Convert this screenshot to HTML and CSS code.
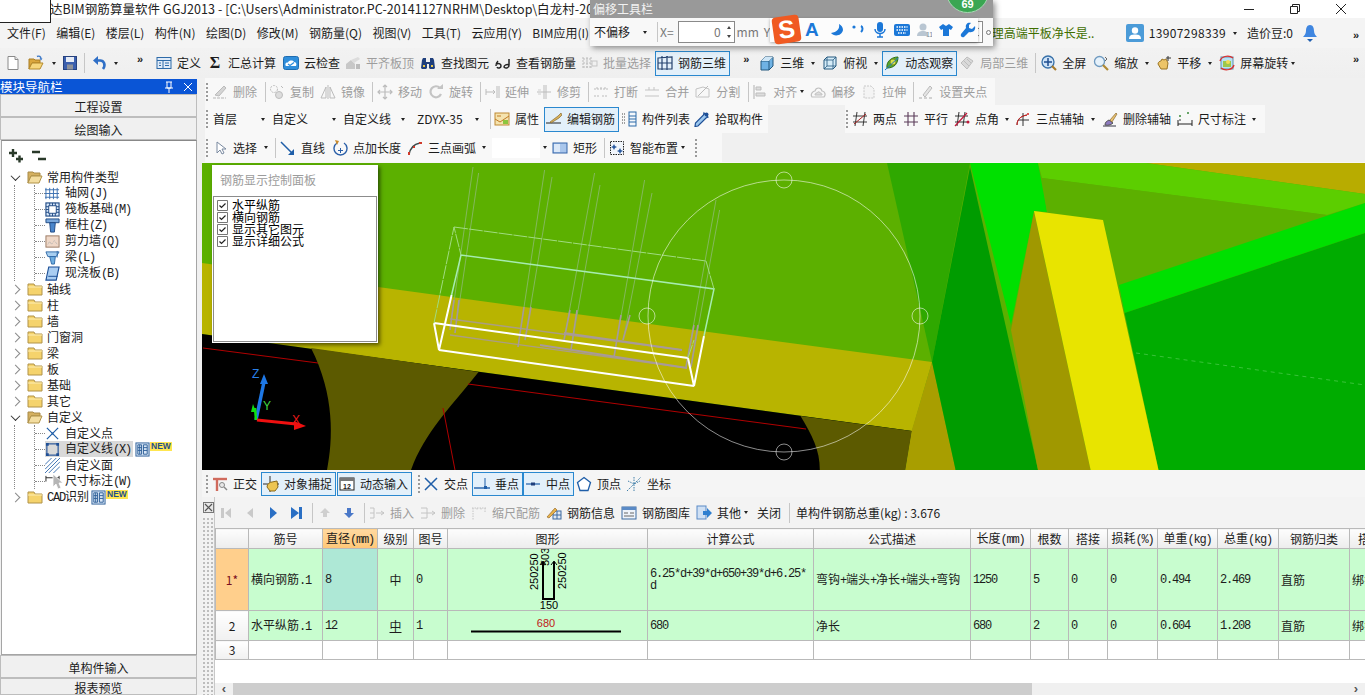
FILE: index.html
```html
<!DOCTYPE html>
<html lang="zh">
<head>
<meta charset="utf-8">
<title>GGJ2013</title>
<link rel="stylesheet" href="styles.css">
</head>
<body>
<svg class="sprite" xmlns="http://www.w3.org/2000/svg">
<symbol id="new" viewBox="0 0 16 16"><path d="M3 1.500h7l3 3v10H3z" fill="#fff" stroke="#8a8a8a"/><path d="M10 1.500v3h3" fill="#e8e8e8" stroke="#8a8a8a"/></symbol>
<symbol id="open" viewBox="0 0 16 16"><path d="M1 4h5l1 1h5v3H4l-3 6z" fill="#d9a63c" stroke="#a87c24"/><path d="M1 14l3-6h11l-3 6z" fill="#f6d77c" stroke="#b48a2c"/><path d="M9 1.500c2-1 4 0 4 2.500" fill="none" stroke="#3c78c8" stroke-width="1.400"/><path d="M11.500 3.500h3l-1.500 2z" fill="#3c78c8"/></symbol>
<symbol id="save" viewBox="0 0 16 16"><rect x="1.500" y="1.500" width="13" height="13" fill="#3b5fae" stroke="#27427e"/><rect x="4" y="2" width="8" height="5" fill="#e6ecf6"/><rect x="5" y="9.500" width="6" height="5" fill="#8e9198"/></symbol>
<symbol id="undo" viewBox="0 0 16 16"><path d="M12 14c3-4 1-9-3.500-8.500H5" fill="none" stroke="#2f6fc6" stroke-width="2.600"/><path d="M7 1L2 5.500 7 10z" fill="#2f6fc6"/></symbol>
<symbol id="def" viewBox="0 0 16 16"><rect x="1" y="2.500" width="14" height="11" fill="#e0ebf8" stroke="#2d6aa8"/><path d="M1 5.500h14M7 5.500v8M9 8h4M9 10.500h4M3 8h2M3 10.500h2" stroke="#2d6aa8"/></symbol>
<symbol id="cloud" viewBox="0 0 16 16"><rect x="0.500" y="1.500" width="15" height="13" rx="2" fill="#2f8edb" stroke="#1e6cb0"/><path d="M3 11c-1.500-2 0-4 2-3.500C6 5 10 5 11 7c2 0 3 2 2 4z" fill="#fff"/><path d="M5 9l2 1.500 4-3" fill="none" stroke="#2f8edb" stroke-width="1.300"/></symbol>
<symbol id="flat" viewBox="0 0 16 16"><path d="M1 14V9l5-4 4 4v5z" fill="#c7c7c7"/><path d="M6 5l7-3 2 2-6 4z" fill="#dcdcdc"/><path d="M11 9h4v5h-4z" fill="#bbb"/></symbol>
<symbol id="bino" viewBox="0 0 16 16"><path d="M1 13l1-8 1-2h3v4h4V3h3l1 2 1 8-1 1h-4l-1-1V9H7v4l-1 1H2z" fill="#1f3f7c"/><path d="M3 10h2v2H3zM11 10h2v2h-2z" fill="#ecc94a"/></symbol>
<symbol id="glass" viewBox="0 0 16 16"><path d="M1 11c0-2 1-4 2-5M2 9c2-1 4 0 4 2s-3 3-4 1M14 4v6c0 3-3 4-5 2 0-2 3-3 5-2" fill="none" stroke="#222" stroke-width="1.500"/></symbol>
<symbol id="batch" viewBox="0 0 16 16"><path d="M1 2v12M5 2v12M9 2v12M1 4h8M1 8h8M1 12h8" stroke="#bbb" stroke-dasharray="2 1"/><rect x="10" y="6" width="5" height="5" fill="none" stroke="#c5c5c5"/></symbol>
<symbol id="r3d" viewBox="0 0 16 16"><path d="M1 3l14-1v12H1zM1 8h14M5 1v14M10 1v14" fill="none" stroke="#24426e" stroke-width="1.200"/></symbol>
<symbol id="cube" viewBox="0 0 16 16"><path d="M2 6l4-4h8v9l-4 4H2z" fill="#6fb2e4" stroke="#24587e"/><path d="M2 6h8v9M10 6l4-4" fill="none" stroke="#24587e"/><path d="M2 6l4-4h8l-4 4z" fill="#cfe6f6"/></symbol>
<symbol id="cubeo" viewBox="0 0 16 16"><path d="M2 5l3-3h9v9l-3 3H2z" fill="#d6ecf8" stroke="#24587e"/><path d="M2 5h9v9M11 5l3-3M5 2v9h9M5 11l-3 3" fill="none" stroke="#24587e" stroke-width=".8"/></symbol>
<symbol id="orbit" viewBox="0 0 16 16"><path d="M3 13C2 7 7 2 14 2c0 7-4 11-11 11z" fill="#5aa52c" stroke="#2f6e18"/><circle cx="9" cy="7" r="3" fill="#d8e04a" stroke="#7a9420"/><path d="M1 15L14 3" stroke="#1c78c8"/></symbol>
<symbol id="local" viewBox="0 0 16 16"><path d="M2 8l6-6 6 4-6 8z" fill="#d9d9d9" stroke="#bdbdbd"/><path d="M5 6l5 5M8 4l4 4" stroke="#bdbdbd"/></symbol>
<symbol id="zall" viewBox="0 0 16 16"><circle cx="7" cy="7" r="6" fill="#cfe3f7" stroke="#3770a8" stroke-width="1.300"/><path d="M7 3v8M3 7h8" stroke="#1f4e90" stroke-width="1.500"/><path d="M11 11l4 4" stroke="#a97a2a" stroke-width="2.200"/></symbol>
<symbol id="zoom" viewBox="0 0 16 16"><circle cx="6.500" cy="6.500" r="5" fill="#e6f1fa" stroke="#6f9ac0" stroke-width="1.300"/><path d="M10 10l5 5" stroke="#b08a34" stroke-width="2.200"/><path d="M12 2l2 2-2 2" fill="none" stroke="#666"/></symbol>
<symbol id="pan" viewBox="0 0 16 16"><path d="M2 9c0-2 2-3 3-3l1-2 2 1 2-1 1 2 1 2-1 6H5z" fill="#ecc468" stroke="#9a7424"/><path d="M12 1v5M10 3h5" stroke="#333"/></symbol>
<symbol id="rot" viewBox="0 0 16 16"><rect x="2" y="2" width="12" height="12" fill="#b8e0f4" stroke="#5a92ae"/><rect x="4" y="6" width="8" height="6" fill="#9dc74c"/><circle cx="9" cy="7" r="2" fill="#f2dc55"/><path d="M1 6C2 2 9-1 14 3M15 10c-1 4-8 7-13 3" fill="none" stroke="#dc2e2e" stroke-width="1.300"/></symbol>
<symbol id="user" viewBox="0 0 18 18"><rect width="18" height="18" rx="2" fill="#4b9bd8"/><circle cx="9" cy="6.500" r="3.200" fill="#fff"/><path d="M3 15c0-4 3-4.500 6-4.500s6 .5 6 4.500z" fill="#fff"/></symbol>
<symbol id="bell" viewBox="0 0 16 18"><path d="M8 1c-3 0-4 3-4 6 0 3-2 5-3 6h14c-1-1-3-3-3-6 0-3-1-6-4-6z" fill="#3f86e0"/><path d="M5 15h6l-3 3z" fill="#1f5fb0"/></symbol>
<symbol id="del" viewBox="0 0 16 16"><path d="M1 14h13" stroke="#b5b5b5" stroke-dasharray="3 1"/><path d="M3 11L12 2l2 2-7 8z" fill="#d5d5d5" stroke="#bbb"/></symbol>
<symbol id="copy" viewBox="0 0 16 16"><circle cx="5" cy="5" r="3.500" fill="none" stroke="#bdbdbd" stroke-dasharray="2 1"/><circle cx="10" cy="11" r="3.500" fill="#ddd" stroke="#bdbdbd"/><path d="M12 2l2 2" stroke="#bbb"/></symbol>
<symbol id="mirror" viewBox="0 0 16 16"><path d="M8 1v14" stroke="#bbb"/><path d="M6 3v11H1zM10 3v11h5z" fill="none" stroke="#bbb"/></symbol>
<symbol id="move" viewBox="0 0 16 16"><path d="M8 1v14M1 8h14M6 3l2-2 2 2M6 13l2 2 2-2M3 6L1 8l2 2M13 6l2 2-2 2" fill="none" stroke="#bcbcbc" stroke-width="1.200"/></symbol>
<symbol id="rotate" viewBox="0 0 16 16"><path d="M12 4a5.500 5.500 0 1 0 1 6" fill="none" stroke="#c4c4c4" stroke-width="2.200"/><path d="M9 5h6V0z" fill="#c4c4c4"/></symbol>
<symbol id="extend" viewBox="0 0 16 16"><path d="M2 5v6M13 2v12M2 8h9M15 2v12" fill="none" stroke="#bcbcbc"/><path d="M9 6l2 2-2 2" fill="none" stroke="#bcbcbc"/></symbol>
<symbol id="trim" viewBox="0 0 16 16"><path d="M8 1v14M10 1v14M1 8h14" stroke="#bcbcbc"/><path d="M2 6h3M2 10h3" stroke="#d0d0d0"/></symbol>
<symbol id="break" viewBox="0 0 16 16"><path d="M1 12h6M9 12h6M1 5h14M4 3v2M8 3v2M12 3v2" stroke="#bcbcbc" stroke-dasharray="2 1"/></symbol>
<symbol id="merge" viewBox="0 0 16 16"><path d="M1 12h14M1 6h14M5 3v3M10 3v3" stroke="#c4c4c4"/></symbol>
<symbol id="split" viewBox="0 0 16 16"><path d="M1 13V5l7-2 6 2v8z" fill="none" stroke="#c4c4c4"/><path d="M3 12L13 2" stroke="#bbb"/></symbol>
<symbol id="align" viewBox="0 0 16 16"><path d="M2 1v14" stroke="#b0b0b0"/><path d="M4 3h5v3H4zM4 9h9v3H4z" fill="#ddd" stroke="#bdbdbd"/></symbol>
<symbol id="offset" viewBox="0 0 16 16"><path d="M2 13c-2-3 1-6 3-6 1-4 6-4 7 0 3 0 4 4 2 6z" fill="none" stroke="#c0c0c0" stroke-width="1.200"/><path d="M5 11c0-2 1-2 2-2 1-2 3-1 3 0 2 0 2 1 2 2z" fill="#ddd" stroke="#c0c0c0"/></symbol>
<symbol id="stretch" viewBox="0 0 16 16"><path d="M3 2h7l3 3v9H3z" fill="#f4f4f4" stroke="#c8c8c8" stroke-dasharray="2 1"/></symbol>
<symbol id="grip" viewBox="0 0 16 16"><path d="M1 14h3M6 14h3M11 14h3" stroke="#aaa"/><path d="M5 11l7-9 2 2-7 9z" fill="#e4e4e4" stroke="#bbb"/></symbol>
<symbol id="prop" viewBox="0 0 16 16"><rect x="1" y="2" width="14" height="12" fill="#f5e3ae" stroke="#bf8a33"/><path d="M3 5h4M1 8l5 3 9-6" fill="none" stroke="#c07a24"/><path d="M9 9h5v4H9z" fill="#8cc63f"/></symbol>
<symbol id="edit" viewBox="0 0 16 16"><path d="M0 12h15" stroke="#222"/><path d="M4 11l8-6 3-3 1 2-3 3-8 5z" fill="#d8b25c" stroke="#7a5a20" stroke-width=".6"/></symbol>
<symbol id="list" viewBox="0 0 16 16"><rect x="8" y="1" width="7" height="14" fill="#f4f8fc" stroke="#2d6aa8"/><path d="M8 5h7M8 8h7M8 11h7" stroke="#2d6aa8"/><path d="M1 3h4M1 6h4M1 9h4M1 12h4" stroke="#444" stroke-dasharray="1 1"/></symbol>
<symbol id="pick" viewBox="0 0 16 16"><path d="M10 2l4 4-2 1-8 8-3 .5L1.500 12l8-8z" fill="#9cc7ee" stroke="#1e4f96" stroke-width="1.200"/><circle cx="12.500" cy="3.500" r="2" fill="#1e4f96"/></symbol>
<symbol id="two" viewBox="0 0 16 16"><path d="M5 1l-2 14M13 1l-2 14M1 5l14 0M1 11h14" stroke="#3a3a3a"/><path d="M2 13L14 3" stroke="#a22"/></symbol>
<symbol id="para" viewBox="0 0 16 16"><path d="M5 1v14M11 1v14M1 5h14M1 11h14" stroke="#5a3a58" stroke-width="1.100"/></symbol>
<symbol id="ang" viewBox="0 0 16 16"><path d="M5 1L3 15M11 1L9 15M1 5h13M1 11h13" stroke="#333"/><path d="M1 15L13 2" stroke="#c0173a" stroke-width="1.200"/><circle cx="14" cy="11" r="1.500" fill="#c0173a"/></symbol>
<symbol id="three" viewBox="0 0 16 16"><path d="M2 14c0-6 4-9 10-10M8 2v13M3 9h11" fill="none" stroke="#333"/><path d="M2 14c0-6 4-9 10-10" fill="none" stroke="#d22"/><circle cx="13" cy="3" r="1" fill="#d22"/></symbol>
<symbol id="brush" viewBox="0 0 16 16"><path d="M1 15h13" stroke="#334"/><path d="M3 14c0-3 2-4 4-5l4 3c-1 1-4 3-8 2z" fill="#8d7bc0" stroke="#555"/><path d="M8 9l6-7 1 1-5 8z" fill="#e8c272" stroke="#77551c" stroke-width=".6"/></symbol>
<symbol id="dim" viewBox="0 0 16 16"><path d="M1 9v6M15 9v6M1 13h14" stroke="#222"/><circle cx="3" cy="5" r="1" fill="#3a8a3a"/><circle cx="11" cy="2" r="1" fill="#3a8a3a"/><circle cx="3" cy="9" r=".8" fill="#222"/></symbol>
<symbol id="sel" viewBox="0 0 16 16"><path d="M5 2v11l3-3 2 4 2-1-2-4h4z" fill="#fff" stroke="#7a8aa0"/></symbol>
<symbol id="line" viewBox="0 0 16 16"><path d="M1 2l12 12" stroke="#1f5ea8" stroke-width="1.500"/><path d="M14 15H8l6-6z" fill="#1f5ea8"/></symbol>
<symbol id="plen" viewBox="0 0 16 16"><path d="M5 3a6.500 6.500 0 1 0 7 0" fill="none" stroke="#2b5fa8" stroke-width="1.400"/><path d="M8.500 8v5M6 10.500h5" stroke="#2b5fa8"/><path d="M3 0l4 1-2 4z" fill="#c98a2a"/></symbol>
<symbol id="arc" viewBox="0 0 16 16"><path d="M2 15C3 8 7 4 13 3" fill="none" stroke="#3a4a4a" stroke-width="1.400"/><rect x="1" y="12" width="2" height="3" fill="#d03a2a"/><rect x="12" y="2" width="3" height="2" fill="#d03a2a"/><rect x="6" y="6" width="2" height="2" fill="#d03a2a"/></symbol>
<symbol id="rectm" viewBox="0 0 16 16"><rect x="1" y="3" width="14" height="10" fill="#a9c6ec" stroke="#3465a8"/><rect x="2" y="4" width="6" height="8" fill="#dbe8f8"/></symbol>
<symbol id="smart" viewBox="0 0 16 16"><rect x="1.500" y="1.500" width="13" height="13" fill="#f2f6fb" stroke="#222" stroke-dasharray="1.500 1"/><path d="M5 4l1 2 2 1-2 1-1 2-1-2-2-1 2-1zM11 8l1 2 2 1-2 1-1 2-1-2-2-1 2-1z" fill="#2a5aa0"/></symbol>
<symbol id="ortho" viewBox="0 0 16 16"><path d="M1 3h14" stroke="#d06a5c" stroke-width="2.400"/><path d="M5 3v12" stroke="#d06a5c" stroke-width="2.400"/><circle cx="10" cy="9" r="2.500" fill="#e8e8e8" stroke="#888"/><path d="M12 11l3 3" stroke="#888" stroke-width="1.400"/></symbol>
<symbol id="snap" viewBox="0 0 16 16"><path d="M0 8h16M7 0v16" stroke="#2a2a2a"/><path d="M4 11c0-3 3-5 5-5l5-1 1 6-3 4H7z" fill="#edc552" stroke="#8a6a1c"/></symbol>
<symbol id="dyn" viewBox="0 0 16 16"><rect x="1" y="2" width="14" height="12" fill="#fff" stroke="#222"/><rect x="1" y="2" width="14" height="3" fill="#777"/><text x="8" y="12.500" font-size="7" font-family="Liberation Sans" font-weight="bold" text-anchor="middle" fill="#222">12</text></symbol>
<symbol id="xp" viewBox="0 0 16 16"><path d="M2 2l12 12M14 2L2 14" stroke="#1f5ea8" stroke-width="1.500"/></symbol>
<symbol id="perp" viewBox="0 0 16 16"><path d="M0 12h16" stroke="#1f5ea8" stroke-width="1.400"/><path d="M11 2v11" stroke="#1f5ea8"/><rect x="10" y="10" width="3" height="3" fill="#1f5ea8"/></symbol>
<symbol id="mid" viewBox="0 0 16 16"><path d="M1 8h14" stroke="#1f5ea8" stroke-width="1.200"/><rect x="6" y="6.500" width="4" height="3" fill="#1f3f7c"/></symbol>
<symbol id="vert" viewBox="0 0 16 16"><path d="M8 1.500l6.500 5-2.500 8H4l-2.500-8z" fill="#fff" stroke="#1f5ea8" stroke-width="1.300"/></symbol>
<symbol id="coord" viewBox="0 0 16 16"><path d="M8 1v14M1 15l7-7 7-7M2 5l6 3 6-3" fill="none" stroke="#3f7ea8" stroke-dasharray="1.500 1"/></symbol>
<symbol id="nf" viewBox="0 0 16 16"><path d="M3 3h3v10H3zM13 3L7 8l6 5z" fill="#c9c9c9"/></symbol>
<symbol id="np" viewBox="0 0 16 16"><path d="M11 3L5 8l6 5z" fill="#c9c9c9"/></symbol>
<symbol id="nn" viewBox="0 0 16 16"><path d="M5 2l7 6-7 6z" fill="#2a6fc4"/></symbol>
<symbol id="nl" viewBox="0 0 16 16"><path d="M2 2l8 6-8 6zM10 2h3v12h-3z" fill="#2a6fc4"/></symbol>
<symbol id="up" viewBox="0 0 16 16"><path d="M8 3l5 5h-3v4H6V8H3z" fill="#cfcfcf"/></symbol>
<symbol id="down" viewBox="0 0 16 16"><path d="M8 13l5-5h-3V3H6v5H3z" fill="#4a78c8"/></symbol>
<symbol id="ins" viewBox="0 0 16 16"><path d="M1 3h4M1 8h4M1 13h4M5 3v10" stroke="#c4c4c4"/><path d="M7 8h8M12 6l3 2-3 2" fill="none" stroke="#c4c4c4"/></symbol>
<symbol id="rem" viewBox="0 0 16 16"><path d="M1 3h6v10H1" fill="none" stroke="#c4c4c4"/><path d="M1 8h14M12 6l3 2-3 2" fill="none" stroke="#c4c4c4"/></symbol>
<symbol id="scale" viewBox="0 0 16 16"><path d="M1 3h14M2 3v12M14 3v4M6 3v2M10 3v2" stroke="#c4c4c4" stroke-dasharray="1.500 1"/></symbol>
<symbol id="info" viewBox="0 0 16 16"><rect x="7" y="6" width="8" height="8" fill="#e0e8f2" stroke="#3d6aa0"/><path d="M7 10h8M11 6v8" stroke="#3d6aa0"/><path d="M1 12L9 3l2 2-8 8z" fill="#e8b34a" stroke="#8a5a1c" stroke-width=".6"/></symbol>
<symbol id="lib" viewBox="0 0 16 16"><rect x="1" y="2" width="14" height="12" fill="#eef3fa" stroke="#3d6aa0"/><rect x="1" y="2" width="14" height="3" fill="#5a8ac6"/><path d="M3 8h4M9 8h4M3 11h10" stroke="#666"/></symbol>
<symbol id="other" viewBox="0 0 16 16"><rect x="1" y="1" width="9" height="13" fill="#cfe0f4" stroke="#5a8ac6"/><path d="M7 6h4V3l5 5-5 5v-3H7z" fill="#2f7fd0"/></symbol>
<symbol id="fo" viewBox="0 0 16 16"><path d="M1 3h5l1 1h6v3H4l-3 7z" fill="#d4b060" stroke="#a88a48"/><path d="M1 14l3-7h11l-3 7z" fill="#f3dda0" stroke="#b09248"/></symbol>
<symbol id="fc" viewBox="0 0 16 16"><path d="M1 3h6l1 2h7v9H1z" fill="#f5d36c" stroke="#b09248"/><path d="M1 6h14" stroke="#fdeeb4"/></symbol>
<symbol id="grid" viewBox="0 0 16 16"><path d="M1 2v12M5 2v12M9 2v12M13 2v12M0 4h15M0 8h15M0 12h15" stroke="#3a6fb0"/></symbol>
<symbol id="raft" viewBox="0 0 16 16"><rect x="1" y="1" width="14" height="14" fill="#d6e6f8" stroke="#204a84" stroke-width="1.200"/><rect x="4" y="4" width="8" height="8" fill="#fff" stroke="#204a84"/><path d="M1 5h3M1 8h3M1 11h3M12 5h3M12 8h3M12 11h3M5 1v3M8 1v3M11 1v3M5 12v3M8 12v3M11 12v3" stroke="#204a84"/></symbol>
<symbol id="col" viewBox="0 0 16 16"><path d="M1 1h14v4H1z" fill="#7aa8dc" stroke="#204a84"/><path d="M5 5h6l-1 10H6z" fill="#4a86cc" stroke="#204a84"/></symbol>
<symbol id="wall" viewBox="0 0 16 16"><rect x="1" y="2" width="14" height="12" fill="#efd8c8" stroke="#9a7860"/><path d="M3 11l2-3 2 3 3-4 3 4" fill="none" stroke="#aaa" stroke-dasharray="1 1"/></symbol>
<symbol id="beam" viewBox="0 0 16 16"><path d="M1 2h14l-3 5H3z" fill="#a8cff0" stroke="#2f6aa8"/><path d="M5 7h6l-1 8H7z" fill="#6faee0" stroke="#2f6aa8"/><path d="M13 1v7" stroke="#2f6aa8"/></symbol>
<symbol id="slab" viewBox="0 0 16 16"><path d="M4 1h11l-3 14H1z" fill="#a9cdf2" stroke="#1c4f96" stroke-width="1.200"/><path d="M3.500 11h10" stroke="#1c4f96"/></symbol>
<symbol id="xn" viewBox="0 0 16 16"><path d="M2 2l12 12M14 2L2 14" stroke="#1f5ea8" stroke-width="1.300"/><circle cx="8" cy="8" r="1" fill="#1f5ea8"/></symbol>
<symbol id="sq" viewBox="0 0 16 16"><rect x="2" y="2" width="12" height="12" fill="none" stroke="#1f4f96" stroke-width="1.200"/><path d="M1 1h3v3H1zM12 1h3v3h-3zM1 12h3v3H1zM12 12h3v3h-3z" fill="#1f4f96"/></symbol>
<symbol id="hatch" viewBox="0 0 16 16"><path d="M0 7L7 0M0 12L12 0M0 16L16 0M4 16L16 4M9 16l7-7" stroke="#3a6fb0"/></symbol>
<symbol id="dimt" viewBox="0 0 16 16"><path d="M1 2v6M15 2v6M1 4h14" stroke="#222"/></symbol>
<symbol id="book" viewBox="0 0 16 16"><rect x="1" y="1" width="14" height="14" fill="#d8e6f6" stroke="#2d5f98"/><path d="M5 3v10M3 3h4v10H3zM9 3h4v10H9zM3 6h4M3 9h4M9 6h4M9 9h4" fill="none" stroke="#2d5f98"/></symbol>
</svg>

<div class="app">
  <div class="titlebar">
    <span class="title">达BIM钢筋算量软件 GGJ2013 - [C:\Users\Administrator.PC-20141127NRHM\Desktop\白龙村-20</span>
    <span class="winbtns">
      <svg class="wb" viewBox="0 0 12 12"><path d="M1 6.500h10" stroke="#222"/></svg>
      <svg class="wb" viewBox="0 0 12 12"><path d="M1.500 3.500h7v7h-7zM3.500 3.500v-2h7v7h-2" fill="none" stroke="#222"/></svg>
      <svg class="wb" viewBox="0 0 12 12"><path d="M1 1l10 10M11 1L1 11" stroke="#222"/></svg>
    </span>
  </div>

  <div class="menubar">
    <span class="mi">文件(F)</span><span class="mi">编辑(E)</span><span class="mi">楼层(L)</span><span class="mi">构件(N)</span><span class="mi">绘图(D)</span><span class="mi">修改(M)</span><span class="mi">钢筋量(Q)</span><span class="mi">视图(V)</span><span class="mi">工具(T)</span><span class="mi">云应用(Y)</span><span class="mi">BIM应用(I)</span>
    <span class="mright">
      <span class="notice">理高端平板净长是..</span>
      <svg class="i18 m34"><use href="#user"/></svg>
      <span class="phone m5">13907298339</span><i class="c m7"></i>
      <span class="m10">造价豆:0</span>
      <svg class="bell m9"><use href="#bell"/></svg>
      <b class="more dbl">»</b>
    </span>
  </div>

  <div class="row r1">
    <svg class="i m5"><use href="#new"/></svg>
    <svg class="i m7"><use href="#open"/></svg><i class="c m8"></i>
    <svg class="i m6"><use href="#save"/></svg><i class="sep m6"></i>
    <svg class="i m6"><use href="#undo"/></svg><i class="c m7"></i>
    <b class="more m19">»</b>
    <span class="it m11"><svg class="i"><use href="#def"/></svg>定义</span>
    <span class="it m6"><b class="sig">Σ</b>汇总计算</span>
    <span class="it m7"><svg class="i"><use href="#cloud"/></svg>云检查</span>
    <span class="it dis m5"><svg class="i"><use href="#flat"/></svg>平齐板顶</span>
    <span class="it m6"><svg class="i"><use href="#bino"/></svg>查找图元</span>
    <span class="it m6"><svg class="i"><use href="#glass"/></svg>查看钢筋量</span>
    <span class="it dis m6"><svg class="i"><use href="#batch"/></svg>批量选择</span>
    <span class="it box m4"><svg class="i"><use href="#r3d"/></svg>钢筋三维</span>
    <b class="more m13">»</b>
    <span class="it m8"><svg class="i"><use href="#cube"/></svg>三维</span><i class="c m7"></i>
    <span class="it m7"><svg class="i"><use href="#cubeo"/></svg>俯视</span><i class="c m7"></i>
    <span class="it box m4"><svg class="i"><use href="#orbit"/></svg>动态观察</span>
    <span class="it dis m2"><svg class="i"><use href="#local"/></svg>局部三维</span>
    <i class="sep m7"></i>
    <span class="it m5"><svg class="i"><use href="#zall"/></svg>全屏</span>
    <span class="it m7"><svg class="i"><use href="#zoom"/></svg>缩放</span><i class="c m7"></i>
    <span class="it m7"><svg class="i"><use href="#pan"/></svg>平移</span><i class="c m7"></i>
    <span class="it m7"><svg class="i"><use href="#rot"/></svg>屏幕旋转</span><i class="c m3"></i>
    <b class="more end">»</b>
  </div>

  <div class="body">
    <aside class="nav">
      <div class="navhead"><span>模块导航栏</span>
        <span class="navbtns">
          <svg class="pin" viewBox="0 0 10 12"><path d="M2 1h6M3 1v6h4V1M1 7h8M5 7v5" fill="none" stroke="#fff"/></svg>
          <svg class="pin" viewBox="0 0 10 12"><path d="M1 2l8 8M9 2l-8 8" stroke="#fff"/></svg>
        </span>
      </div>
      <div class="navbtn">工程设置</div>
      <div class="navbtn second">绘图输入</div>
      <div class="treebox">
        <div class="treetools">
          <svg class="tt" viewBox="0 0 16 16"><path d="M1 6h8M5 2v8M8 12h7M11.500 8.500v7" stroke="#2a3a2a" stroke-width="2.400"/></svg>
          <svg class="tt" viewBox="0 0 16 16"><path d="M1 5h8M7 12h8" stroke="#2a3a2a" stroke-width="2.400"/></svg>
        </div>
        <div class="tn"><i class="chev open"></i><svg class="i"><use href="#fo"/></svg><span class="tl">常用构件类型</span></div>
        <div class="group"><div class="kids">
          <div class="tk"><i class="cn"></i><svg class="i"><use href="#grid"/></svg><span class="tl">轴网<span class="n">(J)</span></span></div>
          <div class="tk"><i class="cn"></i><svg class="i"><use href="#raft"/></svg><span class="tl">筏板基础<span class="n">(M)</span></span></div>
          <div class="tk"><i class="cn"></i><svg class="i"><use href="#col"/></svg><span class="tl">框柱<span class="n">(Z)</span></span></div>
          <div class="tk"><i class="cn"></i><svg class="i"><use href="#wall"/></svg><span class="tl">剪力墙<span class="n">(Q)</span></span></div>
          <div class="tk"><i class="cn"></i><svg class="i"><use href="#beam"/></svg><span class="tl">梁<span class="n">(L)</span></span></div>
          <div class="tk"><i class="cn"></i><svg class="i"><use href="#slab"/></svg><span class="tl">现浇板<span class="n">(B)</span></span></div>
        </div></div>
        <div class="tn"><i class="chev"></i><svg class="i"><use href="#fc"/></svg><span class="tl">轴线</span></div>
        <div class="tn"><i class="chev"></i><svg class="i"><use href="#fc"/></svg><span class="tl">柱</span></div>
        <div class="tn"><i class="chev"></i><svg class="i"><use href="#fc"/></svg><span class="tl">墙</span></div>
        <div class="tn"><i class="chev"></i><svg class="i"><use href="#fc"/></svg><span class="tl">门窗洞</span></div>
        <div class="tn"><i class="chev"></i><svg class="i"><use href="#fc"/></svg><span class="tl">梁</span></div>
        <div class="tn"><i class="chev"></i><svg class="i"><use href="#fc"/></svg><span class="tl">板</span></div>
        <div class="tn"><i class="chev"></i><svg class="i"><use href="#fc"/></svg><span class="tl">基础</span></div>
        <div class="tn"><i class="chev"></i><svg class="i"><use href="#fc"/></svg><span class="tl">其它</span></div>
        <div class="tn"><i class="chev open"></i><svg class="i"><use href="#fo"/></svg><span class="tl">自定义</span></div>
        <div class="group"><div class="kids">
          <div class="tk"><i class="cn"></i><svg class="i"><use href="#xn"/></svg><span class="tl">自定义点</span></div>
          <div class="tk"><i class="cn"></i><span class="selrow"><svg class="i"><use href="#sq"/></svg><span class="tl">自定义线<span class="n">(X)</span></span></span><svg class="bk"><use href="#book"/></svg><span class="new">NEW</span></div>
          <div class="tk"><i class="cn"></i><svg class="i"><use href="#hatch"/></svg><span class="tl">自定义面</span></div>
          <div class="tk"><i class="cn"></i><svg class="i"><use href="#dimt"/></svg><span class="tl">尺寸标注<span class="n">(W)</span></span></div>
        </div></div>
        <div class="tn"><i class="chev"></i><svg class="i"><use href="#fc"/></svg><span class="tl"><span class="n">CAD</span>识别</span><svg class="bk m6"><use href="#book"/></svg><span class="new">NEW</span></div>
        <svg class="cursor" viewBox="0 0 12 17"><path d="M1 1v13l3-3 2 5 3-1-2-5h4z" fill="#b5b5b5" stroke="#fff" stroke-width=".8"/></svg>
      </div>
      <div class="navbtn">单构件输入</div>
      <div class="navbtn last">报表预览</div>
    </aside>

    <main class="main">
      <div class="row r2">
        <div class="seg dis">
          <i class="grip"></i>
          <span class="it m4"><svg class="i"><use href="#del"/></svg>删除</span><i class="sep m8"></i>
          <span class="it m3"><svg class="i"><use href="#copy"/></svg>复制</span>
          <span class="it m6"><svg class="i"><use href="#mirror"/></svg>镜像</span><i class="sep m7"></i>
          <span class="it m4"><svg class="i"><use href="#move"/></svg>移动</span>
          <span class="it m6"><svg class="i"><use href="#rotate"/></svg>旋转</span><i class="sep m7"></i>
          <span class="it m3"><svg class="i"><use href="#extend"/></svg>延伸</span>
          <span class="it m7"><svg class="i"><use href="#trim"/></svg>修剪</span><i class="sep m7"></i>
          <span class="it m4"><svg class="i"><use href="#break"/></svg>打断</span>
          <span class="it m6"><svg class="i"><use href="#merge"/></svg>合并</span>
          <span class="it m6"><svg class="i"><use href="#split"/></svg>分割</span><i class="sep m8"></i>
          <span class="it m3"><svg class="i"><use href="#align"/></svg>对齐</span><i class="c m3"></i>
          <span class="it m6"><svg class="i"><use href="#offset"/></svg>偏移</span>
          <span class="it m6"><svg class="i"><use href="#stretch"/></svg>拉伸</span><i class="sep m7"></i>
          <span class="it m4"><svg class="i"><use href="#grip"/></svg>设置夹点</span>
        </div>
      </div>
      <div class="row r3">
        <div class="seg s3a">
          <i class="grip"></i>
          <span class="combo m5 w48">首层</span><i class="c m0"></i>
          <span class="combo m7 w60">自定义</span><i class="c m0"></i>
          <span class="combo m7 w58">自定义线</span><i class="c m0"></i>
          <span class="combo m12 w58">ZDYX-35</span><i class="c m0"></i>
          <i class="sep m11"></i>
          <span class="it m3"><svg class="i"><use href="#prop"/></svg>属性</span>
          <span class="it box m5"><svg class="i"><use href="#edit"/></svg>编辑钢筋</span>
          <span class="it m2"><svg class="i"><use href="#list"/></svg>构件列表</span>
          <span class="it m4"><svg class="i"><use href="#pick"/></svg>拾取构件</span>
        </div>
        <div class="seg s3b">
          <i class="grip"></i>
          <span class="it m4"><svg class="i"><use href="#two"/></svg>两点</span>
          <span class="it m6"><svg class="i"><use href="#para"/></svg>平行</span>
          <span class="it m6"><svg class="i"><use href="#ang"/></svg>点角</span><i class="c m6"></i>
          <span class="it m6"><svg class="i"><use href="#three"/></svg>三点辅轴</span><i class="c m7"></i>
          <span class="it m7"><svg class="i"><use href="#brush"/></svg>删除辅轴</span>
          <span class="it m6"><svg class="i"><use href="#dim"/></svg>尺寸标注</span><i class="c m6"></i>
        </div>
      </div>
      <div class="row r4">
        <div class="seg s4">
          <i class="grip"></i>
          <span class="it m4"><svg class="i"><use href="#sel"/></svg>选择</span><i class="c m7"></i><i class="sep m7"></i>
          <span class="it m4"><svg class="i"><use href="#line"/></svg>直线</span>
          <span class="it m7"><svg class="i"><use href="#plen"/></svg>点加长度</span>
          <span class="it m6"><svg class="i"><use href="#arc"/></svg>三点画弧</span><i class="c m6"></i>
          <span class="combo white m6"></span><i class="c m3"></i>
          <span class="it m5"><svg class="i"><use href="#rectm"/></svg>矩形</span><i class="sep m7"></i>
          <span class="it m4"><svg class="i"><use href="#smart"/></svg>智能布置</span><i class="c m3"></i>
          <i class="grip m10"></i>
        </div>
      </div>

      <div class="canvas">
        <svg class="scene" viewBox="202 163 1163 307" xmlns="http://www.w3.org/2000/svg">
          <rect x="202" y="163" width="1163" height="307" fill="#5cb000"/>
          <path d="M202 263L378 287 760 339 932 362 912 431 202 334z" fill="#b8b400"/>
          <path d="M202 334L912 431 905 470H202z" fill="#000"/>
          <path d="M311 348L478.600 372C450 408 425 432 411 470H327C333 440 335 395 311 348z" fill="#5c5a00"/>
          <path d="M800.500 416L911.600 431 905.400 470H819.800C820 450 812 435 800.500 416z" fill="#5c5a00"/>
          <path d="M932 362L911.600 431 905.400 470H955.600z" fill="#a89e00"/>
          <path d="M887 163H970L932 362z" fill="#2fa800"/>
          <path d="M970 167L1038 470H955.600L932 362z" fill="#009c00"/>
          <path d="M970 163H1038L1047 212 1034 211 1011 325z" fill="#00e000"/>
          <path d="M1034 212L1011 330 1038 470H1090.600z" fill="#a09800"/>
          <path d="M1146 163H1365V194z" fill="#b8ac00"/>
          <path d="M1038 163H1146L1365 194V203L1327 215 1042 178z" fill="#5cce00"/>
          <path d="M1042 178L1327 215 1119 285 1103 220 1047 212z" fill="#5cb000"/>
          <path d="M1365 203V233L1124.600 313 1119 285z" fill="#00e000"/>
          <path d="M1365 233L1124.600 313 1158.500 470H1365z" fill="#00ac00"/>
          <path d="M1034 211L1103 220 1158.500 470H1090.600z" fill="#e8e400"/>
          <path d="M1136 353L1365 385" stroke="#48c848" stroke-width=".8" stroke-dasharray="4 4"/>
          <path d="M203 348L318 363M468 384L806 429M443 408L455 470" stroke="#b00000" stroke-width="1" fill="none"/>
          <g stroke="#84b85c" stroke-width="1" fill="none">
            <path d="M473 167L450 330M478.600 173L455 333M544.600 170L518 347M552 177L525 340M594.600 173L564 340M600 185L571 350M644.600 180L614 357M652 193L623 340M716 200L686 367M719.600 210L691 367"/>
          </g>
          <g stroke="#a89a98" fill="none">
            <path d="M454 300L450 330M459 300L455 333M524 307L518 347M531 307L525 340M570 310L564 340M577 310L571 350M621 315L614 357M630 315L623 340M694 325L686 367M698 325L691 367" stroke-width="1.600"/>
            <path d="M450 319L682 350M450 335L687 368" stroke-width="1.300" opacity=".85"/>
            <path d="M564 333L682 350M540 345L687 368" stroke-width="2.200"/>
          </g>
          <g fill="none" stroke-width="1.500">
            <path d="M439 350L694 386M434 323L688 358M439 350L451.600 295M694 386L704 336M434 323L439 350M694 386L688 358" stroke="#fff" stroke-width="2"/>
            <path d="M451.600 295L461 255 714 289 704 336" stroke="#a6ecb0"/>
            <path d="M454 227L706 261M434 323L454 227 461 255M706 261L714 289M688 358L694 340" stroke="#a0dc80" stroke-width="1" stroke-dasharray="14 1"/>
          </g>
          <g fill="none" stroke="#fff" stroke-opacity=".55" stroke-width="1">
            <circle cx="784" cy="316" r="136"/>
            <circle cx="784" cy="180" r="8"/><circle cx="920" cy="316" r="8"/><circle cx="784" cy="452" r="8"/><circle cx="647" cy="316" r="8"/>
          </g>
          <path d="M256 420L264 382" stroke="#1e78e6" stroke-width="3.500"/><path d="M264 374l4 10h-8z" fill="#1e78e6"/>
          <path d="M256 420L255 408" stroke="#10e010" stroke-width="2.500"/><path d="M253 404l3 8h-5z" fill="#10e010"/>
          <path d="M257 420L296 424" stroke="#f01010" stroke-width="3"/><path d="M306 426l-12 4v-9z" fill="#f01010"/>
          <text class="ax" x="252" y="378" fill="#2a80e8">Z</text>
          <text class="ax" x="263" y="410" fill="#40d840">Y</text>
          <text class="ax" x="292" y="424" fill="#e81818">X</text>
        </svg>
        <div class="panel">
          <div class="ptitle">钢筋显示控制面板</div>
          <div class="plist">
            <div class="pr"><svg class="cb" viewBox="0 0 11 11"><path d="M.5.500h10v10H.5z" fill="#fff" stroke="#777"/><path d="M2.500 5.500l2 2 4-4" fill="none" stroke="#222" stroke-width="1.200"/></svg>水平纵筋</div>
            <div class="pr"><svg class="cb" viewBox="0 0 11 11"><path d="M.5.500h10v10H.5z" fill="#fff" stroke="#777"/><path d="M2.500 5.500l2 2 4-4" fill="none" stroke="#222" stroke-width="1.200"/></svg>横向钢筋</div>
            <div class="pr"><svg class="cb" viewBox="0 0 11 11"><path d="M.5.500h10v10H.5z" fill="#fff" stroke="#777"/><path d="M2.500 5.500l2 2 4-4" fill="none" stroke="#222" stroke-width="1.200"/></svg>显示其它图元</div>
            <div class="pr"><svg class="cb" viewBox="0 0 11 11"><path d="M.5.500h10v10H.5z" fill="#fff" stroke="#777"/><path d="M2.500 5.500l2 2 4-4" fill="none" stroke="#222" stroke-width="1.200"/></svg>显示详细公式</div>
          </div>
        </div>
      </div>

      <div class="row r5">
        <i class="grip"></i>
        <span class="it m4"><svg class="i"><use href="#ortho"/></svg>正交</span>
        <span class="it box m4"><svg class="i"><use href="#snap"/></svg>对象捕捉</span>
        <span class="it box m1"><svg class="i"><use href="#dyn"/></svg>动态输入</span>
        <i class="grip m6"></i>
        <span class="it m3"><svg class="i"><use href="#xp"/></svg>交点</span>
        <span class="it box m4"><svg class="i"><use href="#perp"/></svg>垂点</span>
        <span class="it box m0"><svg class="i"><use href="#mid"/></svg>中点</span>
        <span class="it m2"><svg class="i"><use href="#vert"/></svg>顶点</span>
        <span class="it m5"><svg class="i"><use href="#coord"/></svg>坐标</span>
      </div>

      <div class="lower">
        <div class="strip">
          <svg class="closebox" viewBox="0 0 11 11"><rect x=".5" y=".5" width="10" height="10" fill="#e8e8e8" stroke="#777"/><path d="M2 2l7 7M9 2l-7 7" stroke="#555" stroke-width="1.200"/></svg>
          <div class="dots"></div>
        </div>
        <div class="lowermain">
          <div class="row r6">
            <svg class="i m3"><use href="#nf"/></svg>
            <svg class="i m8"><use href="#np"/></svg>
            <svg class="i m7"><use href="#nn"/></svg>
            <svg class="i m8"><use href="#nl"/></svg><i class="sep m7"></i>
            <svg class="i m4"><use href="#up"/></svg>
            <svg class="i m8"><use href="#down"/></svg><i class="sep m7"></i>
            <span class="it dis m4"><svg class="i"><use href="#ins"/></svg>插入</span>
            <span class="it dis m6"><svg class="i"><use href="#rem"/></svg>删除</span>
            <span class="it dis m6"><svg class="i"><use href="#scale"/></svg>缩尺配筋</span>
            <span class="it m6"><svg class="i"><use href="#info"/></svg>钢筋信息</span>
            <span class="it m6"><svg class="i"><use href="#lib"/></svg>钢筋图库</span>
            <span class="it m6"><svg class="i"><use href="#other"/></svg>其他</span><i class="c m3"></i>
            <span class="m9">关闭</span><i class="sep m8"></i>
            <span class="m6">单构件钢筋总重(kg) : 3.676</span>
          </div>
          <div class="tablewrap">
            <table class="grid">
              <colgroup>
                <col class="c33"><col class="c74"><col class="c55"><col class="c36"><col class="c34"><col class="c200"><col class="c166"><col class="c157"><col class="c60"><col class="c38"><col class="c39"><col class="c50"><col class="c60"><col class="c61"><col class="c71"><col class="c80">
              </colgroup>
              <thead>
                <tr>
                  <th></th><th>筋号</th><th class="hot">直径<span class="n">(mm)</span></th><th>级别</th><th>图号</th><th>图形</th><th>计算公式</th><th>公式描述</th><th>长度<span class="n">(mm)</span></th><th>根数</th><th>搭接</th><th>损耗<span class="n">(%)</span></th><th>单重<span class="n">(kg)</span></th><th>总重<span class="n">(kg)</span></th><th>钢筋归类</th><th class="clip">搭接形式</th>
                </tr>
              </thead>
              <tbody>
                <tr class="h61">
                  <td class="rn cur">1*</td><td>横向钢筋<span class="n">.1</span></td><td class="seln n">8</td><td class="mid">中</td><td class="n">0</td>
                  <td class="shape">
                    <svg class="sh" viewBox="0 0 200 61">
                      <text class="dimtxt" transform="translate(118 40) rotate(-90)">250250</text>
                      <text class="dimtxt" transform="translate(90 41) rotate(-90)">250250</text>
                      <text class="dimtxt" transform="translate(101 17) rotate(-90)">503</text>
                      <path d="M95 13V50H106V13" fill="none" stroke="#000" stroke-width="2"/>
                      <path d="M92 16l3-4 3 4M103 16l3-4 3 4" fill="none" stroke="#000"/>
                      <text class="dimtxt mid" x="101" y="60">150</text>
                    </svg>
                  </td>
                  <td class="n wrap">6.25*d+39*d+650+39*d+6.25*d</td><td>弯钩<span class="n">+</span>端头<span class="n">+</span>净长<span class="n">+</span>端头<span class="n">+</span>弯钩</td><td class="n">1250</td><td class="n">5</td><td class="n">0</td><td class="n">0</td><td class="n">0.494</td><td class="n">2.469</td><td>直筋</td><td>绑扎</td>
                </tr>
                <tr class="h29">
                  <td class="rn">2</td><td>水平纵筋<span class="n">.1</span></td><td class="n">12</td><td class="mid"><u>中</u></td><td class="n">1</td>
                  <td class="shape">
                    <svg class="sh" viewBox="0 0 200 29">
                      <text class="redtxt" x="98" y="16">680</text>
                      <path d="M23 20.500H173" stroke="#000" stroke-width="2"/>
                    </svg>
                  </td>
                  <td class="n">680</td><td>净长</td><td class="n">680</td><td class="n">2</td><td class="n">0</td><td class="n">0</td><td class="n">0.604</td><td class="n">1.208</td><td>直筋</td><td>绑扎</td>
                </tr>
                <tr class="h19 blank">
                  <td class="rn">3</td><td></td><td></td><td></td><td></td><td></td><td></td><td></td><td></td><td></td><td></td><td></td><td></td><td></td><td></td><td></td>
                </tr>
              </tbody>
            </table>
          </div>
          <div class="hscroll"><span class="arr">‹</span><span class="thumb"></span><span class="arr rt">›</span></div>
        </div>
      </div>
    </main>
  </div>

  <div class="topleft"></div>

  <div class="offsetbar">
    <div class="obtitle">偏移工具栏</div>
    <div class="obbody">
      <span class="obc">不偏移</span><i class="c m13"></i><i class="sep m10"></i>
      <span class="gray m2">X=</span>
      <span class="spin m4"><span class="v">0</span><span class="arrows"><i class="au"></i><i class="ad"></i></span></span>
      <span class="gray m2">mm</span><span class="gray m5">Y=</span>
      <span class="spin s2 m3"><span class="arrows"><i class="au"></i><i class="ad"></i></span></span>
      <i class="dot m3"></i>
    </div>
  </div>
  <div class="ime">
    <b class="imes">S</b>
    <span class="ia">A</span>
    <svg class="ii" viewBox="0 0 16 16"><path d="M11 2c1 5-2 8-8 9 3 4 11 3 12-3 0-3-2-5-4-6z" fill="#1c78d8"/></svg>
    <svg class="ii" viewBox="0 0 16 16"><circle cx="4" cy="5" r="1.600" fill="#1c78d8"/><path d="M11 4c2 1 2 4 0 6" fill="none" stroke="#1c78d8" stroke-width="2"/></svg>
    <svg class="ii" viewBox="0 0 16 16"><rect x="5" y="0" width="6" height="10" rx="3" fill="#1c78d8"/><path d="M3 7c0 6 10 6 10 0M8 12v3M5 15h6" fill="none" stroke="#1c78d8" stroke-width="1.500"/></svg>
    <svg class="ii" viewBox="0 0 16 16"><rect x="0" y="2" width="16" height="12" rx="2" fill="#1c78d8"/><path d="M2.500 5h11M2.500 8h11M4 11h8" stroke="#fff" stroke-width="1.400" stroke-dasharray="1.500 1"/></svg>
    <svg class="ii" viewBox="0 0 16 16"><circle cx="7" cy="5" r="3.500" fill="#b9c6d2"/><path d="M1 14c0-4 3-5 6-5s5 1 5 5z" fill="#b9c6d2"/><text x="10" y="15" font-size="7" font-family="Liberation Sans" fill="#7a8a98">11</text></svg>
    <svg class="ii" viewBox="0 0 16 16"><path d="M5 2L1 5l2 3 2-1v7h6V7l2 1 2-3-4-3-3 2z" fill="#1c78d8"/></svg>
    <svg class="ii" viewBox="0 0 16 16"><path d="M15 4l-3 3-3-1 0-3 2-2c-3-1-6 1-5 5L1 12c-1 2 1 4 3 3l5-5c4 1 7-2 6-6z" fill="#1c78d8"/></svg>
  </div>
  <div class="badge">69</div>
</div>
</body>
</html>
```
FILE: styles.css
```css
*{box-sizing:border-box}
html,body{margin:0;padding:0;height:100%;overflow:hidden}
body{font:12px/16px "Noto Sans CJK SC","Liberation Sans",sans-serif;color:#1c1c1c;background:#f0f0f0}
i{font-style:normal;display:block;flex:none}
.sprite{display:none}
.app{position:relative;width:1365px;height:695px;overflow:hidden;display:flex;flex-direction:column}

.m0{margin-left:0}.m1{margin-left:1px}.m2{margin-left:2px}.m3{margin-left:3px}.m4{margin-left:4px}.m5{margin-left:5px}.m6{margin-left:6px}.m7{margin-left:7px}.m8{margin-left:8px}.m9{margin-left:9px}.m10{margin-left:10px}.m11{margin-left:11px}.m12{margin-left:12px}.m13{margin-left:13px}.m19{margin-left:19px}.m34{margin-left:34px}

.titlebar{height:18px;background:#fff;display:flex;align-items:center;flex:none}
.title{padding-left:50px;font-size:12.5px;letter-spacing:.06px;white-space:nowrap;color:#222}
.winbtns{margin-left:auto;display:flex;gap:34px;padding-right:18px}
.wb{width:12px;height:12px}

.menubar{height:30px;background:#f4f4f4;display:flex;align-items:center;flex:none;padding-left:7px}
.mi{margin-right:10.4px;white-space:nowrap}
.mright{margin-left:auto;display:flex;align-items:center}
.notice{color:#3f6f00;width:105px;padding-left:5px;white-space:nowrap}
.phone{letter-spacing:.36px}
.dot{width:5px;height:5px;border:1px solid #777;border-radius:50%}
.i18{width:18px;height:18px;flex:none}
.bell{width:16px;height:18px;flex:none}
.more{font:bold 11px/10px "Liberation Sans",sans-serif;width:8px;align-self:flex-start;margin-top:6px;flex:none}
.dbl{margin-left:35px;margin-right:4px}
.end{margin-left:auto;margin-right:4px}

.row{display:flex;align-items:center;flex:none}
.r1{height:30px;background:linear-gradient(#f2f2f2,#efefef)}
.i{width:16px;height:16px;flex:none;display:block}
.sig{font:bold 16px/16px "Liberation Serif",serif;width:16px;text-align:center;flex:none}
.it{display:inline-flex;align-items:center;gap:5px;white-space:nowrap;flex:none}
.dis{color:#9d9d9d}
.box{height:25px;border:1px solid #2a88cf;background:#e3f0fa;padding:0 3px 0 1px}
.sep{width:1px;height:20px;background:#c6c6c6;flex:none}
.c{width:0;height:0;border-left:2.500px solid transparent;border-right:2.500px solid transparent;border-top:3px solid #222;flex:none}
.grip{width:2px;height:18px;flex:none;margin-left:1px;background:repeating-linear-gradient(#9a9a9a 0 2px,transparent 2px 4px)}
.grip.m6{margin-left:6px}.grip.m10{margin-left:10px}

.body{flex:1;display:flex;min-height:0}
.nav{width:197px;margin-top:1px;display:flex;flex-direction:column;flex:none;margin-right:5px}
.navhead{height:15px;background:#0a55d6;color:#fff;font-size:12.500px;line-height:15px;display:flex;align-items:center;flex:none}
.navbtns{margin-left:auto;display:flex;gap:9px;padding-right:4px}
.pin{width:10px;height:12px}
.navbtn{height:23px;line-height:23px;text-align:center;background:#f0f0f0;border:1px solid #bdbdbd;flex:none;font-size:12px}
.navbtn.last{height:17px;line-height:17px}
.treebox{position:relative;flex:1;min-height:0;background:#fff;border:1px solid #a5a5a5;border-top-color:#888;margin:0 0 0 1px;overflow:hidden}
.treetools{height:28px;display:flex;align-items:center;gap:7px;padding-left:6px}
.tt{width:16px;height:16px}
.tn{height:16px;display:flex;align-items:center;padding-left:10px}
.chev{width:7px;height:7px;border-right:1.500px solid #8a8a8a;border-bottom:1.500px solid #8a8a8a;transform:rotate(-45deg);margin:0 8px 0 0}
.chev.open{transform:rotate(45deg) translate(-1px,-1px);border-color:#333}
.tl{white-space:nowrap}
.tn .tl{margin-left:4px}
.n{font-family:"Liberation Mono","Noto Sans CJK SC",monospace;letter-spacing:-1.200px}
.group{margin-left:12px;border-left:1px dotted #888}
.kids{margin-left:19px;border-left:1px dotted #888}
.tk{height:16px;display:flex;align-items:center}
.cn{width:10px;border-top:1px dotted #888}
.tk .i{width:15px;height:15px}
.tk .tl{margin-left:5px}
.selrow{display:flex;align-items:center;height:16px;background:#d9d9d9;padding-right:2px}
.bk{width:15px;height:15px;flex:none;margin-left:2px}
.new{font:bold 8.500px/9px "Liberation Sans",sans-serif;background:#ffe650;color:#24508a;align-self:flex-start;margin-top:1px;padding:0 1px}
.cursor{position:absolute;left:50px;top:332px;width:12px;height:17px}

.main{flex:1;min-width:0;display:flex;flex-direction:column}
.seg{display:flex;align-items:center;background:#f8f8f8;height:100%;flex:none}
.r2{height:27px;padding-left:3px}
.r2 .seg{width:790px}
.r3{height:28px;padding-left:3px}
.s3a{width:563px}
.s3b{margin-left:77px;width:420px}
.r4{height:29px;padding-left:3px}
.s4{width:517px}
.combo{display:block;white-space:nowrap;flex:none}
.w48{width:48px}.w60{width:60px}.w58{width:58px}
.combo.white{width:48px;height:20px;background:#fff}

.canvas{position:relative;height:308px;flex:none;border-top:1px solid #f6f6f6;overflow:hidden}
.scene{display:block;width:1163px;height:307px}
.ax{font:12px "Liberation Sans",sans-serif}
.panel{position:absolute;left:10px;top:2px;width:166px;height:178px;background:#fff;box-shadow:2px 2px 4px rgba(0,0,0,.55);display:flex;flex-direction:column}
.ptitle{height:31px;line-height:30px;padding-left:8px;color:#9c9c9c;flex:none}
.plist{flex:1;margin:0 1px 1px 1px;border:1px solid #8c8c8c;padding-top:2px}
.pr{height:12px;line-height:12px;display:flex;align-items:center;padding-left:3px;color:#000;white-space:nowrap}
.cb{width:11px;height:11px;margin-right:4px;flex:none}

.r5{height:27px;padding-left:3px;background:#f5f5f5}
.r5 .box{height:24px}
.lower{flex:1;min-height:0;display:flex;background:#fff}
.strip{width:13px;flex:none;display:flex;flex-direction:column;background:#f2f2f2;border-right:1px solid #c8c8c8}
.closebox{width:11px;height:11px;margin:5px 0 4px 1px;flex:none}
.dots{flex:1;background-image:radial-gradient(#bdbdbd 1px,transparent 1.100px);background-size:4px 4px}
.lowermain{flex:1;min-width:0;display:flex;flex-direction:column;position:relative}
.r6{height:31px;background:#f3f3f3}
.tablewrap{height:155px;overflow:hidden;flex:none;background:#fff}
.grid{table-layout:fixed;border-collapse:collapse;width:1214px;font-size:12px}
.c33{width:33px}.c74{width:74px}.c55{width:55px}.c36{width:36px}.c34{width:34px}.c200{width:200px}.c166{width:166px}.c157{width:157px}.c60{width:60px}.c38{width:38px}.c39{width:39px}.c50{width:50px}.c61{width:61px}.c71{width:71px}.c80{width:80px}
.grid th{height:20px;font-weight:400;background:linear-gradient(#fdfdfd,#ececec);border:1px solid #b9b9b9;padding:0;white-space:nowrap;overflow:hidden}
.grid th.hot{background:linear-gradient(#ffd9a0,#ffc777)}
.grid th.clip{text-align:left;padding-left:8px}
.grid td{border:1px solid #b9b9b9;padding:0 0 0 2px;background:#c8fdcf;white-space:nowrap;overflow:hidden}
.h61 td{height:61px}.h29 td{height:29px}.h19 td{height:19px}
.grid .blank td{background:#fff}
.grid td.rn{text-align:center;padding:0;background:linear-gradient(#fff,#f0f0f0)}
.grid td.cur{background:#ffcf8c;color:#7a1020}
.grid td.seln{background:#aee8d6}
.grid td.mid{text-align:center;padding:0}
.grid tr td:nth-child(3){border-left:1px solid #000}
.grid td.shape{padding:0}
.grid td.wrap{white-space:normal;word-break:break-all;line-height:12px;padding-right:4px}
.sh{display:block;width:200px}
.dimtxt{font:11px "Liberation Sans",sans-serif;fill:#000}
.dimtxt.mid{text-anchor:middle}
.redtxt{font:11px "Liberation Sans",sans-serif;fill:#c01818;text-anchor:middle}
.hscroll{position:absolute;left:0;right:0;bottom:0;height:12px;background:#f0f0f0;display:flex;align-items:center}
.arr{width:18px;flex:none;font:bold 13px/12px "Liberation Sans",sans-serif;color:#555;text-align:center}
.arr.rt{margin-left:auto}
.thumb{width:799px;height:12px;background:#cdcdcd;flex:none}

.topleft{position:absolute;left:0;top:0;width:51px;height:23px;background:#fff;border:1px solid #222;border-left:0;border-top:0}

.offsetbar{position:absolute;left:590px;top:0;width:403px;height:46px;background:#fff;box-shadow:2px 2px 6px rgba(0,0,0,.45);display:flex;flex-direction:column}
.obtitle{height:18px;line-height:17px;background:#999;color:#f2f2f2;padding-left:3px;flex:none}
.obbody{flex:1;display:flex;align-items:center;padding-left:4px;background:#f8f8f8}
.obc{white-space:nowrap;width:36px}
.gray{color:#777;white-space:nowrap}
.spin{width:57px;height:22px;border:1px solid #8a8a8a;background:#fff;display:flex;align-items:center;justify-content:flex-end;flex:none}
.spin.s2{width:203px}
.v{color:#777;margin-right:6px}
.arrows{display:flex;flex-direction:column;gap:6px;padding-right:3px}
.au{width:0;height:0;border-left:2.500px solid transparent;border-right:2.500px solid transparent;border-bottom:3px solid #444}
.ad{width:0;height:0;border-left:2.500px solid transparent;border-right:2.500px solid transparent;border-top:3px solid #444}

.ime{position:absolute;left:770px;top:18px;width:208px;height:24px;background:#fcfcfc;display:flex;align-items:center;box-shadow:0 1px 3px rgba(0,0,0,.3)}
.imes{position:absolute;left:3px;top:-2px;width:27px;height:27px;border-radius:4px;transform:rotate(-8deg);background:#f05a22;color:#fff;font:bold 25px/27px "Liberation Sans",sans-serif;text-align:center}
.ia{position:absolute;left:35px;top:2px;font:bold 19px/20px "Liberation Sans",sans-serif;color:#1c78d8}
.ii{width:16px;height:16px;flex:none;margin-left:6px}
.ii:nth-of-type(1){margin-left:58px}
.badge{position:absolute;left:946px;top:-30px;width:43px;height:43px;border-radius:50%;background:#3aa652;border:1px solid #a8d8b4;color:#fff;font:bold 11px/11px "Liberation Sans",sans-serif;text-align:center;padding-top:28px}
```
